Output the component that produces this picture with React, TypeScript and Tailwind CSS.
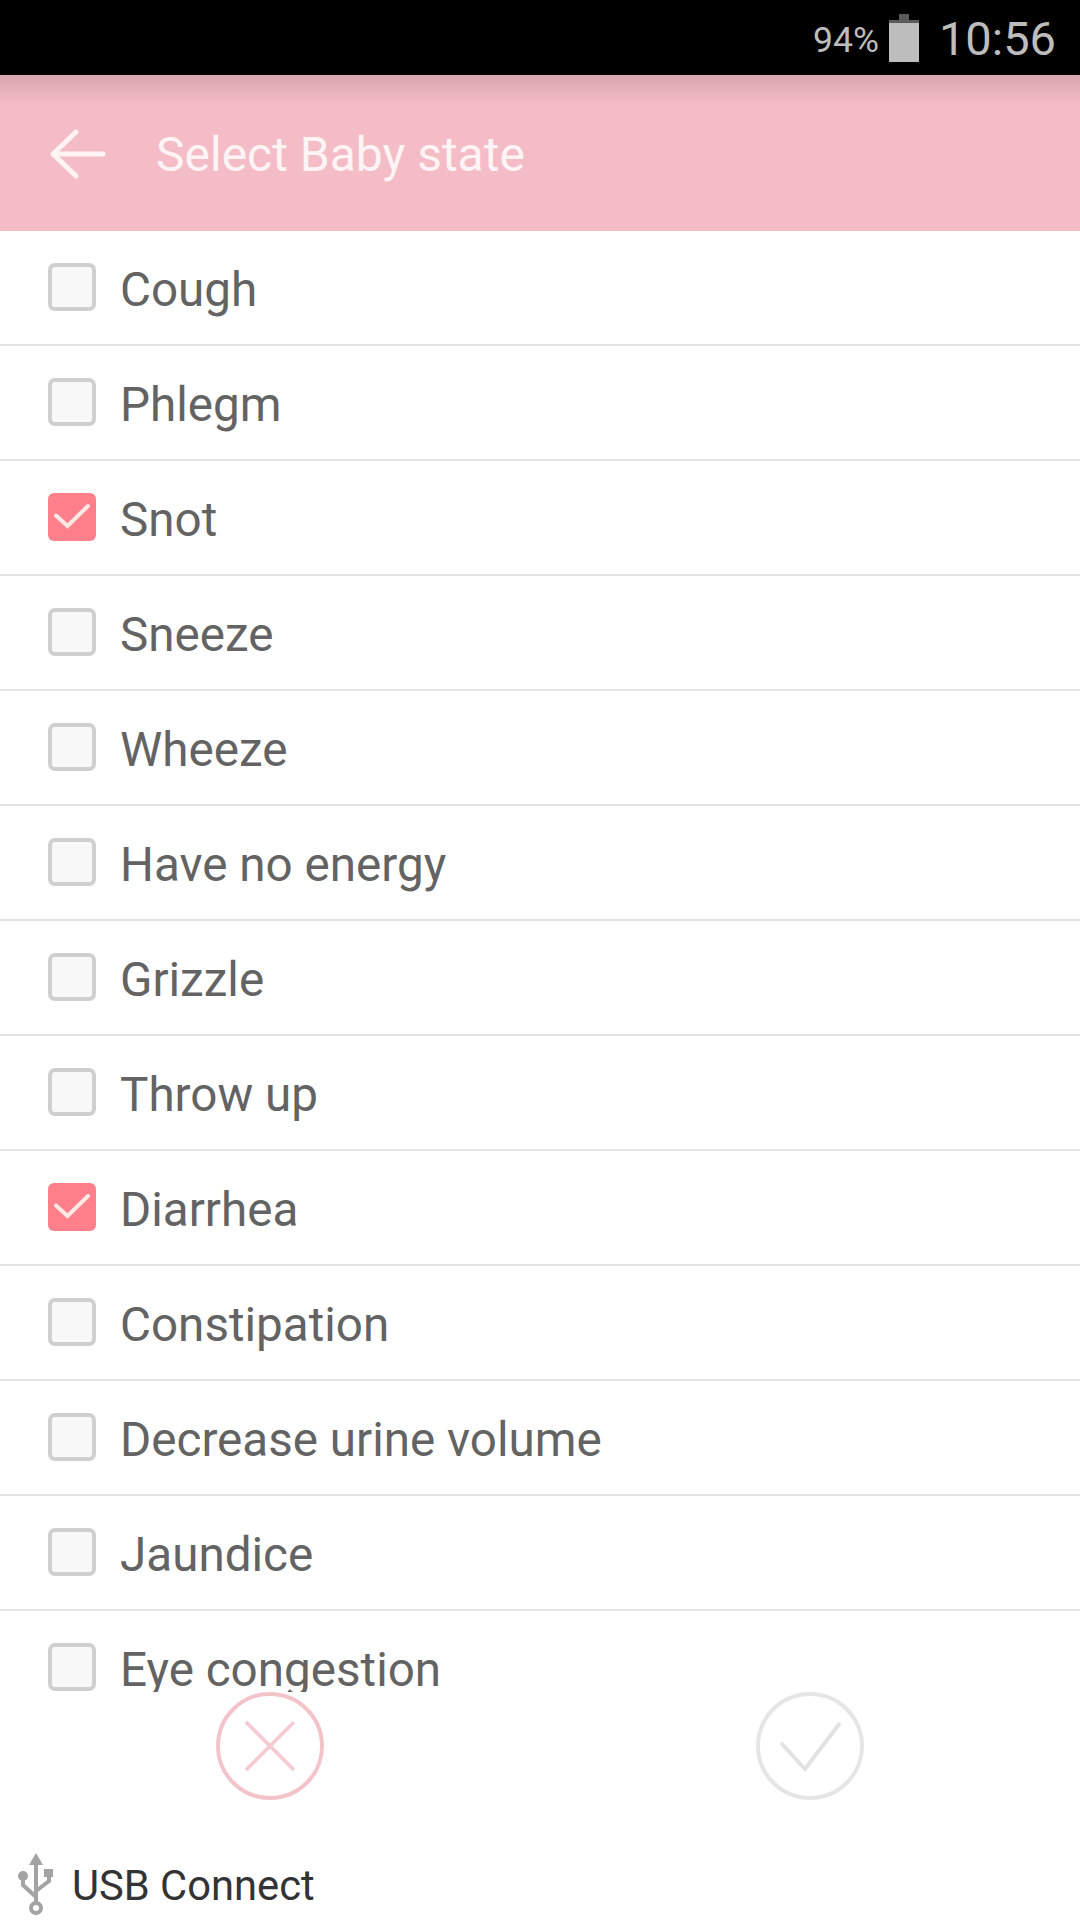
const STATES = [
  { label: "Cough", checked: false },
  { label: "Phlegm", checked: false },
  { label: "Snot", checked: true },
  { label: "Sneeze", checked: false },
  { label: "Wheeze", checked: false },
  { label: "Have no energy", checked: false },
  { label: "Grizzle", checked: false },
  { label: "Throw up", checked: false },
  { label: "Diarrhea", checked: true },
  { label: "Constipation", checked: false },
  { label: "Decrease urine volume", checked: false },
  { label: "Jaundice", checked: false },
  { label: "Eye congestion", checked: false },
];

function Checkbox({ checked }: { checked: boolean }) {
  if (checked) {
    return (
      <div className="w-[48px] h-[48px] rounded-[6px] bg-[#ff7f8a] flex items-center justify-center shrink-0">
        <svg width="48" height="48" viewBox="0 0 48 48" fill="none">
          <path d="M8 22.5 L19.5 33 L40 13" stroke="#ffe9e6" strokeWidth="4" strokeLinecap="round" strokeLinejoin="miter" />
        </svg>
      </div>
    );
  }
  return <div className="w-[48px] h-[48px] rounded-[7px] border-[4px] border-[#cfcfcf] bg-[#f8f8f8] shrink-0" />;
}

function Row({ label, checked }: { label: string; checked: boolean }) {
  return (
    <div className="h-[115px] shrink-0 border-b-2 border-[#e3e3e3] pl-[48px] flex items-center gap-[24px] box-border">
      <div className="-mt-[2px]">
        <Checkbox checked={checked} />
      </div>
      <span className="text-[47.6px] leading-none text-[#636363] mt-[6px]">{label}</span>
    </div>
  );
}

export default function App() {
  return (
    <div className="w-[1080px] h-[1920px] bg-white flex flex-col overflow-hidden font-['Roboto',sans-serif]">
      {/* Status bar */}
      <div className="h-[75px] shrink-0 bg-black flex items-center justify-end pr-[24px] text-[#bdbdbd]">
        <span className="text-[35.5px] leading-none mt-[7px]">94%</span>
        <svg width="30" height="48" viewBox="0 0 30 48" className="ml-[10px] mt-[1px]">
          <rect x="10" y="0" width="10" height="6" fill="#5a5a5a" />
          <rect x="0" y="6" width="30" height="3" fill="#5a5a5a" />
          <rect x="0" y="9" width="30" height="39" fill="#bdbdbd" />
        </svg>
        <span className="text-[47px] leading-none ml-[20px] mt-[2px]">10:56</span>
      </div>

      {/* Header */}
      <div className="h-[156px] shrink-0 bg-[#f4bcc6] relative flex items-center">
        <div className="absolute top-0 left-0 right-0 h-[30px] bg-gradient-to-b from-[#d9a5ae] to-[#f4bcc6]" />
        <svg width="60" height="60" viewBox="0 0 60 60" fill="none" className="relative ml-[48px] mt-[2px]">
          <path d="M55 30 H6 M28 8 L5 30 L28 52" stroke="#fff3f4" strokeWidth="5" strokeLinecap="round" strokeLinejoin="round" />
        </svg>
        <span className="relative ml-[48px] mt-[4px] text-[48px] leading-none text-[#fff4f5]">Select Baby state</span>
      </div>

      {/* List */}
      <div className="flex-1 min-h-0 overflow-hidden flex flex-col">
        {STATES.map((s) => (
          <Row key={s.label} label={s.label} checked={s.checked} />
        ))}
      </div>

      {/* Footer */}
      <div className="h-[228px] shrink-0 bg-white flex flex-col">
        <div className="grid grid-cols-2 justify-items-center">
          <svg width="108" height="108" viewBox="0 0 108 108" fill="none">
            <circle cx="54" cy="54" r="52" stroke="#f4c3ca" strokeWidth="4" />
            <path d="M30 30 L78 78 M78 30 L30 78" stroke="#f4c9cf" strokeWidth="3.5" />
          </svg>
          <svg width="108" height="108" viewBox="0 0 108 108" fill="none">
            <circle cx="54" cy="54" r="52" stroke="#e5e5e5" strokeWidth="4" />
            <path d="M25 51 L49 77 L84 31" stroke="#e2e2e2" strokeWidth="4" />
          </svg>
        </div>
        <div className="mt-auto h-[64px] mb-[3px] flex items-center pl-[17px]">
          <svg width="38" height="64" viewBox="0 0 38 64" fill="none">
            <path d="M19 0 L12 12 H26 Z" fill="#a3a3a3" />
            <path d="M19 10 V50 M6 24 V32 L19 44 M32 20 V28 L19 38" stroke="#a3a3a3" strokeWidth="4" />
            <circle cx="6" cy="23" r="5" fill="#a3a3a3" />
            <rect x="27" y="16" width="9" height="8" fill="#a3a3a3" />
            <circle cx="19" cy="55" r="5" stroke="#a3a3a3" strokeWidth="4" />
          </svg>
          <span className="ml-[17px] mt-[1px] text-[41.7px] leading-none text-[#333333]">USB Connect</span>
        </div>
      </div>
    </div>
  );
}
